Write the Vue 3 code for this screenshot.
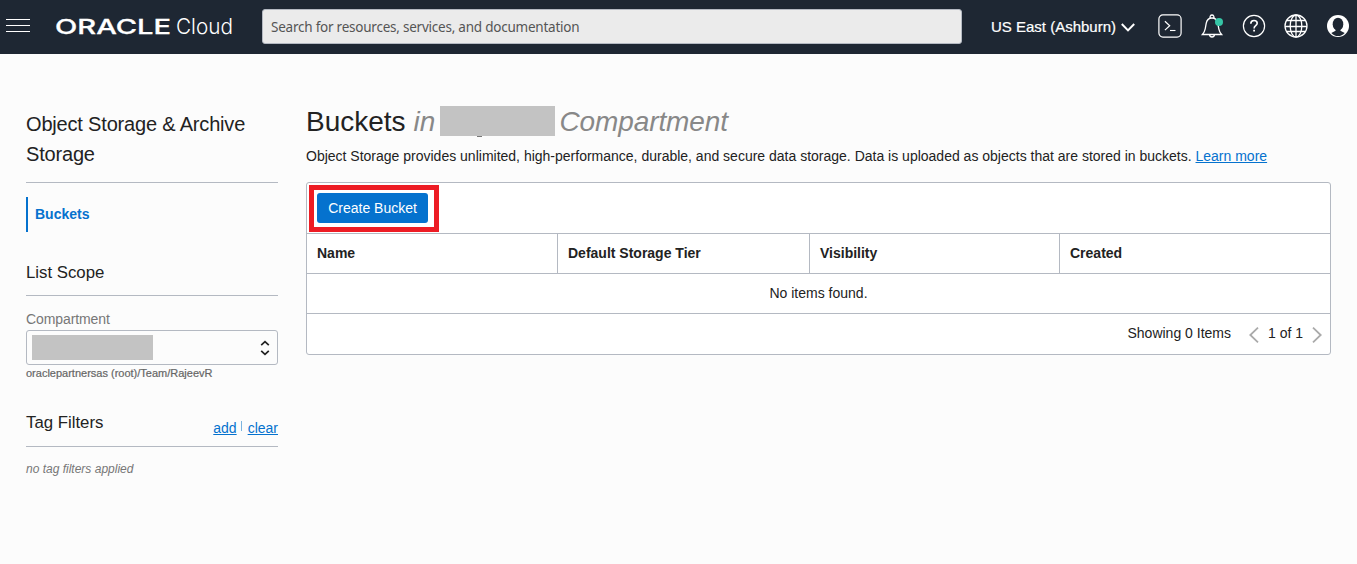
<script setup>
const columns = ['Name', 'Default Storage Tier', 'Visibility', 'Created']
</script>

<template>
  <div class="page">
    <header class="topbar">
      <svg class="menu" width="24" height="14" viewBox="0 0 24 14">
        <path d="M0 .5h24M0 6.5h24M0 12.5h24" stroke="#fff" stroke-width="1" />
      </svg>
      <svg class="logo" width="180" height="28" viewBox="0 0 180 28">
        <text class="oracle" x="-1" y="21" textLength="116" lengthAdjust="spacingAndGlyphs">ORACLE</text>
        <text class="cloud" x="120" y="21" textLength="57" lengthAdjust="spacingAndGlyphs">Cloud</text>
      </svg>
      <div class="search">Search for resources, services, and documentation</div>
      <div class="region">
        <span>US East (Ashburn)</span>
        <svg width="14" height="9" viewBox="0 0 14 9"><path d="M.8 1l6.2 6.4L13.2 1" fill="none" stroke="#fff" stroke-width="2" /></svg>
      </div>
      <nav class="tools">
        <svg width="24" height="24" viewBox="0 0 24 24" fill="none" stroke="#fff">
          <rect x=".9" y=".9" width="22.2" height="22.2" rx="4" stroke-width="1.2" />
          <path d="M6.9 7.3l4.8 4.4-4.8 4.4" stroke-width="1.2" /><path d="M12 16.5h5.5" stroke-width="1.1" />
        </svg>
        <svg width="24" height="24" viewBox="0 0 24 24" fill="none" stroke="#fff" stroke-width="1.3">
          <path d="M2.4 20.5h19.2c-1.5-1.7-2.3-3.3-2.8-5.7l-1-5.4C17.2 6.2 15.3 4 12 4S6.8 6.2 6.2 9.4l-1 5.4c-.5 2.4-1.3 4-2.8 5.7z" />
          <path d="M10.3 4.2c-.7-1.5.2-3.2 1.7-3.2s2.4 1.7 1.7 3.2M9.5 20.7c.2 1.5 1.2 2.3 2.5 2.3s2.3-.8 2.5-2.3" />
          <circle cx="19" cy="8" r="4" fill="#36c5a6" stroke="none" />
        </svg>
        <svg width="24" height="24" viewBox="0 0 24 24" fill="none" stroke="#fff">
          <circle cx="12" cy="12" r="10.6" stroke-width="1.2" />
          <path d="M8.8 9.8c0-2.1 1.3-3.3 3.2-3.3s3.2 1.1 3.2 2.8c0 2.4-3.1 2.5-3.1 5.1" stroke-width="1.6" />
          <path d="M12.1 15.8v1.8" stroke-width="1.8" />
        </svg>
        <svg width="24" height="24" viewBox="0 0 24 24" fill="none" stroke="#fff" stroke-width="1.3">
          <circle cx="12" cy="12" r="11" /><ellipse cx="12" cy="12" rx="5.8" ry="11" />
          <path d="M12 1v22M1 12.5h22M3 6.5h18M3 17.5h18" />
        </svg>
        <svg width="24" height="24" viewBox="0 0 24 24">
          <circle cx="12" cy="12" r="11" fill="#fff" />
          <ellipse cx="12" cy="10.2" rx="5.3" ry="6.5" fill="#1e2733" />
          <path d="M9.6 15.5v1.2L5.3 18.9C7 20.9 9.4 22 12 22s5-1.1 6.7-3.1l-4.3-2.2v-1.2z" fill="#1e2733" />
        </svg>
      </nav>
    </header>

    <div class="body">
      <aside class="sidebar">
        <h2 class="title">Object Storage &amp; Archive Storage</h2>
        <div class="nav-item">Buckets</div>
        <h3 class="scope">List Scope</h3>
        <div class="label">Compartment</div>
        <div class="select">
          <span class="select-mask"></span>
          <svg width="10" height="16" viewBox="0 0 10 16" fill="none" stroke="#222" stroke-width="1.7"><path d="M1.2 5.2L5 1.6l3.8 3.6M1.2 10.8L5 14.4l3.8-3.6" /></svg>
        </div>
        <div class="path">oraclepartnersas (root)/Team/RajeevR</div>
        <div class="tags">
          <h3>Tag Filters</h3>
          <div class="tag-links"><a>add</a><i></i><a>clear</a></div>
        </div>
        <div class="none">no tag filters applied</div>
      </aside>

      <main class="main">
        <h1><span>Buckets</span><em class="in">in</em><span class="mask"></span><em class="comp">Compartment</em></h1>
        <p class="desc">Object Storage provides unlimited, high-performance, durable, and secure data storage. Data is uploaded as objects that are stored in buckets. <a>Learn more</a></p>
        <section class="table">
          <div class="toolbar"><div class="highlight"><button>Create Bucket</button></div></div>
          <div class="head"><div v-for="c in columns" :key="c">{{ c }}</div></div>
          <div class="empty">No items found.</div>
          <div class="foot">
            <span class="showing">Showing 0 Items</span>
            <svg width="10" height="16" viewBox="0 0 10 16"><path d="M9 .7L1.3 8 9 15.3" fill="none" stroke="#aaa" stroke-width="1.8" /></svg>
            <span class="count">1 of 1</span>
            <svg width="10" height="16" viewBox="0 0 10 16"><path d="M1 .7L8.7 8 1 15.3" fill="none" stroke="#aaa" stroke-width="1.8" /></svg>
          </div>
        </section>
      </main>
    </div>
  </div>
</template>

<style>
body { background: #fcfcfc; }
</style>

<style scoped>
* { box-sizing: border-box; }
.page { height: 564px; overflow: hidden; background: #fcfcfc; font: 14px/20px "Liberation Sans", Arial, sans-serif; color: #222; }
h1, h2, h3, p { margin: 0; font-weight: 400; }
svg { display: block; flex: none; }
a { color: #0572ce; text-decoration: underline; }
.topbar { height: 54px; background: #1e2733; display: flex; align-items: center; padding: 0 7px 0 6px; }
.menu { margin-top: -3px; }
.logo { margin: 0 0 0 26px; fill: #fff; overflow: visible; }
.oracle { font: 500 20.5px Inter, sans-serif; stroke: #fff; stroke-width: .3px; }
.cloud { font: 300 22px Inter, sans-serif; }
.search { width: 700px; height: 35px; margin-left: 26px; margin-top: -1px; border: 1px solid #b4b9c2; border-radius: 3px; background: #ebebeb; color: #555; font: 13.5px/35px "Noto Sans", "Open Sans", sans-serif; letter-spacing: -.23px; padding-left: 8px; }
.region { display: flex; align-items: center; gap: 5px; color: #fff; margin-left: 29px; font-size: 15px; white-space: nowrap; }
.region span { -webkit-text-stroke: .2px #fff; }
.tools { display: flex; gap: 18px; margin-left: auto; }
.tools svg { margin-top: -2px; }
.body { display: flex; padding: 0 26px; gap: 28px; }
.sidebar { width: 252px; flex: none; padding-top: 55px; }
.title { font-size: 20px; letter-spacing: -.18px; line-height: 30px; height: 74px; border-bottom: 1px solid #b4b9c2; }
.nav-item { margin-top: 14px; height: 35px; line-height: 35px; border-left: 2px solid #0572ce; padding-left: 7px; color: #0572ce; font-weight: 700; }
.scope { margin-top: 31px; height: 33px; font-size: 16.8px; line-height: 20px; border-bottom: 1px solid #b4b9c2; }
.label { margin-top: 13px; color: #777; letter-spacing: -.1px; }
.select { margin-top: 1px; height: 35px; border: 1px solid #b4b9c2; border-radius: 3px; display: flex; align-items: center; justify-content: space-between; padding: 0 7px 0 5px; }
.select-mask { width: 121px; height: 25px; background: #c3c3c3; }
.path { font-size: 11px; line-height: 16px; color: #666; -webkit-text-stroke: .2px #666; }
.tags { display: flex; justify-content: space-between; height: 34px; margin-top: 32px; border-bottom: 1px solid #b4b9c2; }
.tags h3 { font-size: 16.8px; line-height: 20px; }
.tag-links { display: flex; margin-top: 5px; }
.tag-links i { width: 1px; height: 10px; background: #7db4df; margin: 3px 6px 0 4px; }
.none { margin-top: 12px; font-size: 12px; line-height: 20px; font-style: italic; color: #777; }
.main { flex: 1; padding-top: 51px; }
h1 { display: flex; height: 34px; font-size: 28px; line-height: 34px; color: #222; }
h1 em { color: #888; }
.in { margin-left: 8px; }
.mask { position: relative; width: 115px; height: 30px; background: #c3c3c3; margin: 1px 4px 0 5px; }
.mask::after { content: ""; position: absolute; left: 37px; top: 30px; width: 5px; height: 1px; background: #777; }
.comp { letter-spacing: -.1px; }
.desc { margin-top: 7px; height: 36px; white-space: nowrap; }
.table { border: 1px solid #b4b9c2; border-radius: 3px; background: #fff; height: 173px; }
.toolbar { height: 51px; border-bottom: 1px solid #b4b9c2; padding: 2px; }
.highlight { width: 130px; height: 47px; border: 5px solid #ed1c24; padding: 3px; }
button { display: block; width: 111px; height: 30px; border: 0; border-radius: 3px; background: #0572ce; color: #fff; font: 14px "Liberation Sans", Arial, sans-serif; padding: 0; }
.head { display: grid; grid-template-columns: 251px 252px 250px 1fr; height: 40px; border-bottom: 1px solid #b4b9c2; font-weight: 700; line-height: 39px; }
.head div { padding-left: 10px; border-right: 1px solid #b4b9c2; }
.head div:last-child { border-right: 0; }
.empty { height: 40px; line-height: 39px; text-align: center; border-bottom: 1px solid #b4b9c2; }
.foot { height: 40px; display: flex; justify-content: flex-end; align-items: center; padding-right: 8px; }
.foot span { margin-top: -2px; }
.foot svg { margin-top: 2px; }
.showing { margin-right: 18px; }
.count { margin: 0 9px; }
</style>
